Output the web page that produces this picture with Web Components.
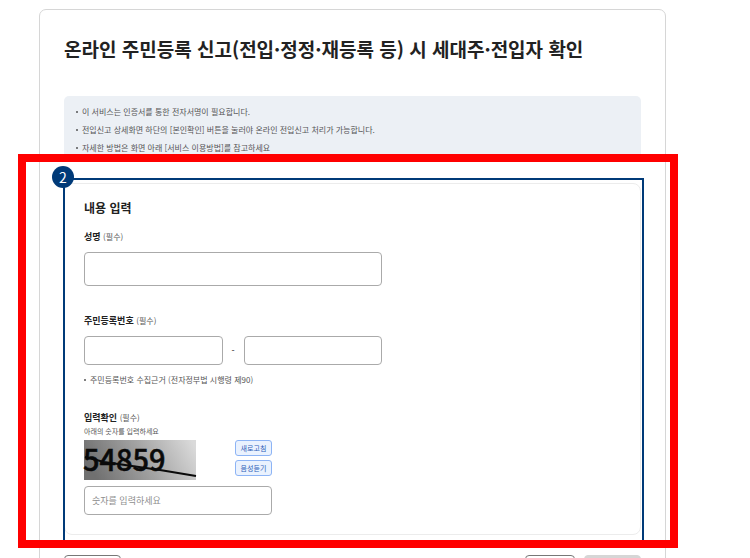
<!DOCTYPE html>
<html lang="ko">
<head>
<meta charset="UTF-8">
<meta name="viewport" content="width=device-width, initial-scale=1">
<title>세대주·전입자 확인</title>
<style>
  body {
    margin: 0;
    padding: 9px 84px 0 39px;
    background: #fff;
    color: #222;
    font-family: "Noto Sans CJK KR", sans-serif;
  }
</style>
</head>
<body>
<confirm-panel>
  <span slot="title">온라인 주민등록 신고(전입·정정·재등록 등) 시 세대주·전입자 확인</span>
  <notice-box>
    <li>이 서비스는 인증서를 통한 전자서명이 필요합니다.</li>
    <li>전입신고 상세화면 하단의 [본인확인] 버튼을 눌러야 온라인 전입신고 처리가 가능합니다.</li>
    <li>자세한 방법은 화면 아래 [서비스 이용방법]를 참고하세요</li>
  </notice-box>
  <step-highlight step="2">
    <form-card heading="내용 입력">
      <name-field></name-field>
      <resident-number-field></resident-number-field>
      <captcha-field code="54859"></captcha-field>
    </form-card>
  </step-highlight>
  <action-bar></action-bar>
</confirm-panel>

<script>
/* Styles shared by the three form fields */
const fieldStyles = `
  :host { display: block; }
  .label {
    display: block;
    margin: 0;
    font-size: 9px;
    line-height: 14px;
    font-weight: 700;
    color: #222;
  }
  .label small { font-size: 8px; font-weight: 400; color: #555; }
  input {
    box-sizing: border-box;
    width: 100%;
    min-width: 0;
    height: 29px;
    padding: 0 7px;
    border: 1px solid #aaa;
    border-radius: 4px;
    background: #fff;
    color: #222;
    font: inherit;
    font-size: 9px;
  }
  input::placeholder { color: #8e8e8e; }
`;

/**
 * ConfirmPanel
 * - Outer bordered panel with the page title
 */
class ConfirmPanel extends HTMLElement {
  constructor() {
    super();
    this.attachShadow({ mode: "open" });
    this.shadowRoot.innerHTML = `
      <style>
        :host {
          display: block;
          padding: 25px 24px 24px;
          border: 1px solid #d6d6d6;
          border-radius: 7px;
        }
        h1 {
          margin: 0 0 33px;
          font-size: 19px;
          line-height: 28px;
          font-weight: 700;
          color: #222;
        }
      </style>
      <h1><slot name="title"></slot></h1>
      <slot></slot>
    `;
  }
}

/**
 * NoticeBox
 * - Grey box, takes <li> items in its slot
 */
class NoticeBox extends HTMLElement {
  constructor() {
    super();
    this.attachShadow({ mode: "open" });
    this.shadowRoot.innerHTML = `
      <style>
        :host {
          display: block;
          padding: 7px 12px 4px;
          border-radius: 5px 5px 0 0;
          background: #ecf0f5;
        }
        ul { margin: 0; padding: 0; list-style: none; }
        ::slotted(li) {
          display: block;
          font-size: 8px;
          line-height: 18px;
          color: #555;
        }
        ::slotted(li)::before {
          content: "";
          display: inline-block;
          width: 2px;
          height: 2px;
          margin-right: 4px;
          border-radius: 50%;
          background: #555;
          vertical-align: 2px;
        }
      </style>
      <ul><slot></slot></ul>
    `;
  }
}

/**
 * StepHighlight
 * - Marks its content with a numbered navy frame and a red guide frame
 * - Attributes supported: `step`
 */
class StepHighlight extends HTMLElement {
  constructor() {
    super();
    this.attachShadow({ mode: "open" });
  }

  connectedCallback() {
    this.shadowRoot.innerHTML = `
      <style>
        :host {
          display: block;
          position: relative;
          margin: 22px 0 20px;
        }
        .frame, .guide {
          position: absolute;
          box-sizing: border-box;
          pointer-events: none;
        }
        .frame {
          inset: -5px -3px -10px -1px;
          border: 2px solid #003a78;
        }
        .guide {
          inset: -29px -37px -13px -46px;
          border: 8px solid #f00;
        }
        .badge {
          position: absolute;
          top: -17px;
          left: -12px;
          width: 22px;
          height: 22px;
          border-radius: 50%;
          background: #003a78;
          color: #fff;
          font-size: 14px;
          line-height: 22px;
          text-align: center;
        }
      </style>
      <slot></slot>
      <div class="frame"></div>
      <div class="guide"></div>
      <span class="badge">${this.getAttribute("step") || ""}</span>
    `;
  }
}

/**
 * FormCard
 * - Card that stacks the form fields
 * - Attributes supported: `heading`
 */
class FormCard extends HTMLElement {
  constructor() {
    super();
    this.attachShadow({ mode: "open" });
  }

  connectedCallback() {
    this.shadowRoot.innerHTML = `
      <style>
        :host {
          display: block;
          padding: 15px 19px 19px;
          border: 1px solid #ececec;
          border-radius: 8px;
        }
        h2 {
          margin: 0 0 13px;
          font-size: 12px;
          line-height: 18px;
          font-weight: 700;
          color: #222;
        }
        .fields {
          display: flex;
          flex-direction: column;
          gap: 24px;
        }
      </style>
      <h2>${this.getAttribute("heading") || ""}</h2>
      <div class="fields"><slot></slot></div>
    `;
  }
}

class NameField extends HTMLElement {
  constructor() {
    super();
    this.attachShadow({ mode: "open" });
    this.shadowRoot.innerHTML = `
      <style>
        ${fieldStyles}
        :host { max-width: 298px; padding-bottom: 4px; }
        input { display: block; height: 34px; margin-top: 8px; }
      </style>
      <label class="label" for="name">성명 <small>(필수)</small></label>
      <input id="name" type="text" required>
    `;
  }
}

class ResidentNumberField extends HTMLElement {
  constructor() {
    super();
    this.attachShadow({ mode: "open" });
    this.shadowRoot.innerHTML = `
      <style>
        ${fieldStyles}
        .row {
          display: grid;
          grid-template-columns: 1fr 21px 1fr;
          align-items: center;
          max-width: 298px;
          margin-top: 8px;
          font-size: 9px;
          text-align: center;
        }
        .note {
          display: flex;
          align-items: center;
          gap: 4px;
          margin: 8px 0 0;
          font-size: 8px;
          line-height: 14px;
          color: #555;
        }
        .note::before {
          content: "";
          width: 2px;
          height: 2px;
          border-radius: 50%;
          background: #555;
        }
      </style>
      <label class="label" for="front">주민등록번호 <small>(필수)</small></label>
      <div class="row">
        <input id="front" type="text" inputmode="numeric" maxlength="6" required>
        <span>-</span>
        <input type="password" aria-label="주민등록번호 뒷자리" maxlength="7" required>
      </div>
      <p class="note">주민등록번호 수집근거 (전자정부법 시행령 제90)</p>
    `;
  }
}

/**
 * CaptchaField
 * - Number picture, refresh and listen buttons, answer box
 * - Attributes supported: `code`
 */
class CaptchaField extends HTMLElement {
  constructor() {
    super();
    this.attachShadow({ mode: "open" });
  }

  connectedCallback() {
    this.shadowRoot.innerHTML = `
      <style>
        ${fieldStyles}
        :host { max-width: 188px; }
        .hint {
          margin: 0 0 3px;
          font-size: 7px;
          line-height: 12px;
          color: #555;
        }
        .row {
          display: flex;
          justify-content: space-between;
          margin-bottom: 6px;
        }
        svg { display: block; width: 112px; height: 40px; overflow: visible; }
        .buttons {
          display: flex;
          flex-direction: column;
          gap: 4px;
        }
        button {
          box-sizing: border-box;
          width: 37px;
          height: 16px;
          padding: 0;
          border: 1px solid #8db4f5;
          border-radius: 3px;
          background: #eaf2fe;
          color: #2f5fb8;
          font: inherit;
          font-size: 7px;
          line-height: 14px;
        }
        input { display: block; }
      </style>
      <label class="label" for="answer">입력확인 <small>(필수)</small></label>
      <p class="hint">아래의 숫자를 입력하세요</p>
      <div class="row">
        <svg viewBox="0 0 112 40" role="img" aria-label="입력확인 숫자">
          <defs>
            <linearGradient id="shade" x1="0" y1="0.4" x2="1" y2="0.2">
              <stop offset="0" stop-color="#707070"/>
              <stop offset="0.5" stop-color="#a2a2a2"/>
              <stop offset="1" stop-color="#dadada"/>
            </linearGradient>
          </defs>
          <rect width="112" height="40" fill="url(#shade)"/>
          <text x="-1" y="31" font-size="29" font-weight="500" fill="#0a0a0a" stroke="#0a0a0a" stroke-width="0.5">${this.getAttribute("code") || ""}</text>
          <path d="M1 17 L20 22 L76 30 L112 36" fill="none" stroke="#0a0a0a" stroke-width="2"/>
        </svg>
        <div class="buttons">
          <button type="button">새로고침</button>
          <button type="button">음성듣기</button>
        </div>
      </div>
      <input id="answer" type="text" inputmode="numeric" placeholder="숫자를 입력하세요" required>
    `;
  }
}

/**
 * ActionBar
 * - Buttons at the foot of the panel
 */
class ActionBar extends HTMLElement {
  constructor() {
    super();
    this.attachShadow({ mode: "open" });
    this.shadowRoot.innerHTML = `
      <style>
        :host {
          display: flex;
          gap: 9px;
        }
        button {
          box-sizing: border-box;
          width: 57px;
          height: 29px;
          border: 1px solid #777;
          border-radius: 4px;
          background: #fff;
        }
        .cancel { width: 50px; margin-left: auto; }
        .confirm { border-color: #d6d6d6; background: #d6d6d6; }
      </style>
      <button type="button" aria-label="이전"></button>
      <button type="button" class="cancel" aria-label="취소"></button>
      <button type="button" class="confirm" aria-label="확인" disabled></button>
    `;
  }
}

customElements.define("confirm-panel", ConfirmPanel);
customElements.define("notice-box", NoticeBox);
customElements.define("step-highlight", StepHighlight);
customElements.define("form-card", FormCard);
customElements.define("name-field", NameField);
customElements.define("resident-number-field", ResidentNumberField);
customElements.define("captcha-field", CaptchaField);
customElements.define("action-bar", ActionBar);
</script>
</body>
</html>
